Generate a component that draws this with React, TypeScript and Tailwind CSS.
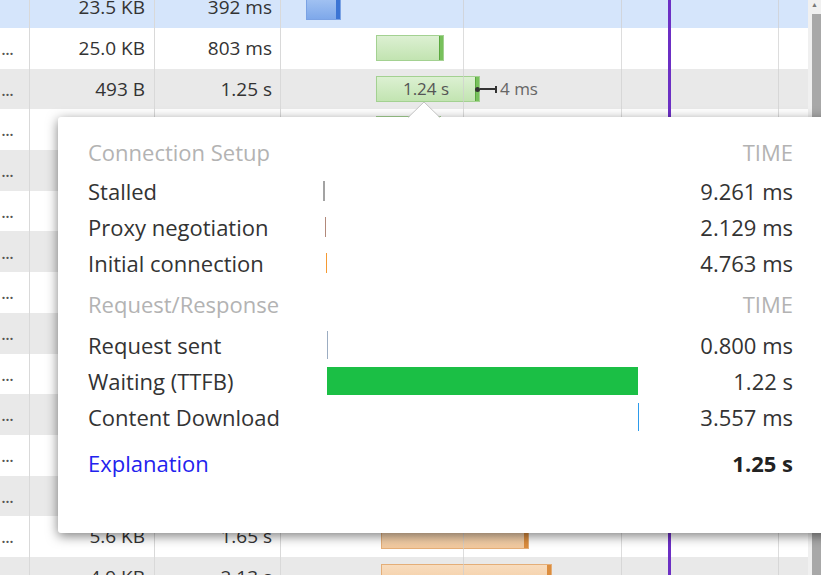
type BarKind = "blue" | "green" | "orange";

interface Row {
  dots: boolean;
  size: string;
  time: string;
  start: number;
  width: number;
  kind: BarKind;
  label?: string;
  whisker?: boolean;
  selected?: boolean;
}

const rows: Row[] = [
  { dots: false, size: "23.5 KB", time: "392 ms", start: 25, width: 35, kind: "blue", selected: true },
  { dots: true, size: "25.0 KB", time: "803 ms", start: 95, width: 68, kind: "green" },
  { dots: true, size: "493 B", time: "1.25 s", start: 95, width: 104, kind: "green", label: "1.24 s", whisker: true },
  { dots: true, size: "24.8 KB", time: "798 ms", start: 95, width: 65, kind: "green" },
  { dots: true, size: "18.2 KB", time: "812 ms", start: 96, width: 70, kind: "green" },
  { dots: true, size: "3.1 KB", time: "1.02 s", start: 98, width: 88, kind: "green" },
  { dots: true, size: "7.4 KB", time: "1.11 s", start: 99, width: 95, kind: "orange" },
  { dots: true, size: "2.9 KB", time: "1.18 s", start: 99, width: 101, kind: "orange" },
  { dots: true, size: "6.3 KB", time: "1.27 s", start: 100, width: 110, kind: "orange" },
  { dots: true, size: "4.2 KB", time: "1.39 s", start: 100, width: 120, kind: "orange" },
  { dots: true, size: "5.1 KB", time: "1.48 s", start: 100, width: 130, kind: "orange" },
  { dots: true, size: "3.3 KB", time: "1.56 s", start: 100, width: 138, kind: "orange" },
  { dots: true, size: "4.0 KB", time: "1.60 s", start: 100, width: 143, kind: "orange" },
  { dots: true, size: "5.6 KB", time: "1.65 s", start: 100, width: 148, kind: "orange" },
  { dots: true, size: "4.9 KB", time: "2.13 s", start: 100, width: 171, kind: "orange" },
];

const barStyles: Record<BarKind, { body: string; tail: string }> = {
  blue: {
    body: "bg-gradient-to-b from-[#a9c7f3] to-[#7ea8ea] border border-[#7aa2e4]",
    tail: "bg-[#3b74d4]",
  },
  green: {
    body: "bg-gradient-to-b from-[#dcf0d2] to-[#c2e4b1] border border-[#a3d191]",
    tail: "bg-[#78c15c] border-l border-[#5aa83e]",
  },
  orange: {
    body: "bg-gradient-to-b from-[#f8dcbd] to-[#f2c99e] border border-[#e4ae78]",
    tail: "bg-[#dc8d3e]",
  },
};

interface Phase {
  name: string;
  ms: number;
  start: number;
  color: string;
  display: string;
}

const TOTAL = 1250;
const BAR_COL = 318;

const setup: Phase[] = [
  { name: "Stalled", ms: 9.261, start: 0, color: "bg-[#a3a3a3]", display: "9.261 ms" },
  { name: "Proxy negotiation", ms: 2.129, start: 9.261, color: "bg-[#b2897a]", display: "2.129 ms" },
  { name: "Initial connection", ms: 4.763, start: 11.39, color: "bg-[#f59a33]", display: "4.763 ms" },
];

const reqres: Phase[] = [
  { name: "Request sent", ms: 0.8, start: 16.15, color: "bg-[#9cadc2]", display: "0.800 ms" },
  { name: "Waiting (TTFB)", ms: 1220, start: 16.95, color: "bg-[#1bbf45]", display: "1.22 s" },
  { name: "Content Download", ms: 3.557, start: 1236.95, color: "bg-[#2d9bec]", display: "3.557 ms" },
];

const TableRow = ({ row }: { row: Row }) => {
  const style = barStyles[row.kind];
  const bg = row.selected ? "bg-[#d5e5fb]" : "odd:bg-[#e9e9e9] even:bg-white";
  return (
    <div className={`flex h-[40.7px] items-center text-[19px] text-[#333] ${bg}`}>
      <div className="w-[30px] h-full flex items-center justify-end pr-[16px] border-r border-[#d9d9d9] text-[#555] tracking-[-1px]">
        {row.dots ? "..." : ""}
      </div>
      <div className="w-[125px] h-full flex items-center justify-end pr-[9px] border-r border-[#d9d9d9]">
        {row.size}
      </div>
      <div className="w-[126px] h-full flex items-center justify-end pr-[8px] border-r border-[#d9d9d9]">
        {row.time}
      </div>
      <div className="relative flex-1 h-full">
        <div
          className={`absolute top-[7px] h-[26px] flex ${style.body}`}
          style={{ left: row.start, width: row.width }}
        >
          <div className="flex-1 flex items-center justify-center text-[17px] text-[#555]">
            {row.label}
          </div>
          <div className={`w-[4px] h-full ${style.tail}`} />
        </div>
        {row.whisker && (
          <div
            className="absolute top-0 h-full flex items-center"
            style={{ left: row.start + row.width - 5 }}
          >
            <div className="w-[5px] h-[5px] rounded-full bg-[#333]" />
            <div className="w-[15px] h-[2px] bg-[#333]" />
            <div className="w-[2px] h-[7px] bg-[#333]" />
            <span className="ml-[3px] text-[17px] text-[#666]">4 ms</span>
          </div>
        )}
      </div>
    </div>
  );
};

const PhaseRow = ({ p, barH }: { p: Phase; barH: string }) => (
  <div className="flex h-[36px] items-center">
    <div className="w-[235px] text-[#333]">{p.name}</div>
    <div className="relative w-[318px] h-full flex items-center">
      <div
        className={`absolute ${barH} ${p.color}`}
        style={{
          left: (p.start / TOTAL) * BAR_COL,
          width: Math.max(1, (p.ms / TOTAL) * BAR_COL),
        }}
      />
    </div>
    <div className="flex-1 text-right text-[#333]">{p.display}</div>
  </div>
);

const Header = ({ title }: { title: string }) => (
  <div className="flex h-[36px] items-center text-[#b3b3b3]">
    <div className="flex-1">{title}</div>
    <div>TIME</div>
  </div>
);

export default function App() {
  return (
    <div className="relative w-[821px] h-[575px] overflow-hidden bg-white font-['Open_Sans','Noto_Sans',sans-serif]">
      <div className="flex h-full">
        <div className="relative w-[808px] h-full overflow-hidden">
          <div className="-mt-[12.7px]">
            {rows.map((r, i) => (
              <TableRow key={i} row={r} />
            ))}
          </div>
          {/* timeline grid */}
          <div className="absolute top-0 left-[463px] w-px h-full bg-[#cfcfcf]/70" />
          <div className="absolute top-0 left-[621px] w-px h-full bg-[#cfcfcf]/70" />
          <div className="absolute top-0 left-[668px] w-[3px] h-full bg-[#6c2fc4]" />
          <div className="absolute top-0 left-[778px] w-px h-full bg-[#cfcfcf]/70" />
        </div>
        <div className="w-[13px] h-full bg-[#f0f0f0] flex flex-col items-end">
          <div className="w-full h-[14px] flex justify-center pt-[1px] text-[7px] leading-none text-[#777]">▲</div>
          <div className="w-[9px] flex-1 bg-[#a8a8a8]" />
        </div>
      </div>

      {/* timing popover */}
      <div className="absolute left-[58px] top-[117px] w-[800px] h-[416px] bg-white rounded-[3px] shadow-[0_3px_12px_rgba(0,0,0,0.5)]">
        <svg className="absolute left-[350px] -top-[16px]" width="32" height="17" viewBox="0 0 32 17">
          <polygon points="0,17 16,1 32,17" fill="white" />
          <polyline points="0,16.5 16,1 32,16.5" fill="none" stroke="#c4c4c4" strokeWidth="1" />
        </svg>
        <div className="w-[735px] pl-[30px] pt-[17px] text-[22px]">
          <Header title="Connection Setup" />
          <div className="mt-[3px]">
            {setup.map((p) => (
              <PhaseRow key={p.name} p={p} barH="h-[20px]" />
            ))}
          </div>
          <div className="mt-[5px]">
            <Header title="Request/Response" />
          </div>
          <div className="mt-[5px]">
            {reqres.map((p) => (
              <PhaseRow key={p.name} p={p} barH="h-[28px]" />
            ))}
          </div>
          <div className="flex h-[36px] items-center mt-[10px]">
            <div className="flex-1 text-[#2222ee]">Explanation</div>
            <div className="font-bold text-[#222]">1.25 s</div>
          </div>
        </div>
      </div>
    </div>
  );
}
